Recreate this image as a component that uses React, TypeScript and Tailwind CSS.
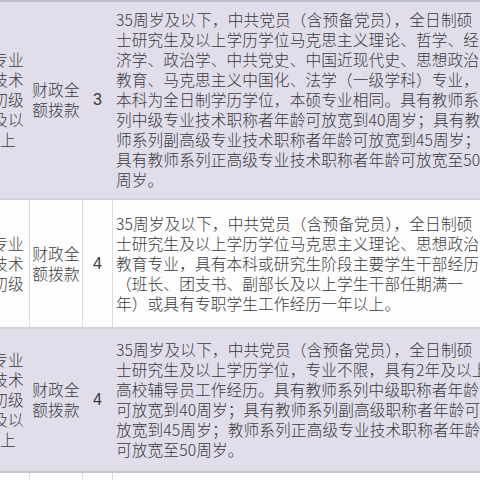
import React from "react";

type Row = {
  purple: boolean;
  h: string;
  c1: string[];
  c2: string[];
  c3: string;
  c4: string[];
};

const rows: Row[] = [
  {
    purple: true,
    h: "h-[196px]",
    c1: ["专业", "技术", "初级", "及以", "上"],
    c2: ["财政全", "额拨款"],
    c3: "3",
    c4: [
      "35周岁及以下，中共党员（含预备党员），全日制硕",
      "士研究生及以上学历学位马克思主义理论、哲学、经",
      "济学、政治学、中共党史、中国近现代史、思想政治",
      "教育、马克思主义中国化、法学（一级学科）专业，",
      "本科为全日制学历学位，本硕专业相同。具有教师系",
      "列中级专业技术职称者年龄可放宽到40周岁；具有教",
      "师系列副高级专业技术职称者年龄可放宽到45周岁；",
      "具有教师系列正高级专业技术职称者年龄可放宽至50",
      "周岁。",
    ],
  },
  {
    purple: false,
    h: "h-[127px]",
    c1: ["专业", "技术", "初级"],
    c2: ["财政全", "额拨款"],
    c3: "4",
    c4: [
      "35周岁及以下，中共党员（含预备党员），全日制硕",
      "士研究生及以上学历学位马克思主义理论、思想政治",
      "教育专业，具有本科或研究生阶段主要学生干部经历",
      "（班长、团支书、副部长及以上学生干部任期满一",
      "年）或具有专职学生工作经历一年以上。",
    ],
  },
  {
    purple: true,
    h: "h-[142px]",
    c1: ["专业", "技术", "初级", "及以", "上"],
    c2: ["财政全", "额拨款"],
    c3: "4",
    c4: [
      "35周岁及以下，中共党员（含预备党员），全日制硕",
      "士研究生及以上学历学位，专业不限，具有2年及以上",
      "高校辅导员工作经历。具有教师系列中级职称者年龄",
      "可放宽到40周岁；具有教师系列副高级职称者年龄可",
      "放宽到45周岁；教师系列正高级专业技术职称者年龄",
      "可放宽至50周岁。",
    ],
  },
];

function Lines({ lines, center }: { lines: string[]; center?: boolean }) {
  return (
    <div className={center ? "flex flex-col items-center" : "flex flex-col"}>
      {lines.map((l, i) => (
        <span key={i} className="block h-[20px] whitespace-nowrap">
          {l}
        </span>
      ))}
    </div>
  );
}

export default function App() {
  return (
    <div className="w-[480px] h-[480px] overflow-hidden bg-[#fdfdfd] font-['Noto_Sans_CJK_SC',sans-serif] font-light text-[15.7px] leading-[20px] tracking-[0.1px] text-[#3a3a3a]">
      <div className="-ml-[13px] w-[493px] flex flex-col">
        <div className="h-[2px] bg-[#bfbbcd]" />
        {rows.map((r, i) => {
          const bg = r.purple ? "bg-[#e1ddeb]" : "bg-[#fdfdfd]";
          const bl = r.purple ? "border-l border-transparent" : "border-l border-[#dcdcdc]";
          return (
            <React.Fragment key={i}>
              <div className={`grid grid-cols-[42px_53px_30px_1fr] ${r.h} ${bg}`}>
                <div className="flex items-center justify-center">
                  <Lines lines={r.c1} center />
                </div>
                <div className={`flex items-center justify-center ${bl}`}>
                  <Lines lines={r.c2} center />
                </div>
                <div className={`flex items-center justify-center ${bl} font-['Liberation_Sans',sans-serif] text-[16px]`}>
                  {r.c3}
                </div>
                <div className={`flex items-center pl-[3px] ${bl}`}>
                  <Lines lines={r.c4} />
                </div>
              </div>
              <div
                className={
                  i === 0
                    ? "h-[2px] bg-[#d5d0e0]"
                    : i === 1
                    ? "h-[2px] bg-[#d3cfd9]"
                    : "h-[2px] bg-[#c7c3cf]"
                }
              />
            </React.Fragment>
          );
        })}
        <div className="grid grid-cols-[42px_53px_30px_1fr] h-[40px] bg-[#fdfdfd]">
          <div />
          <div className="border-l border-[#dcdcdc]" />
          <div className="border-l border-[#dcdcdc]" />
          <div className="border-l border-[#dcdcdc]" />
        </div>
      </div>
    </div>
  );
}
